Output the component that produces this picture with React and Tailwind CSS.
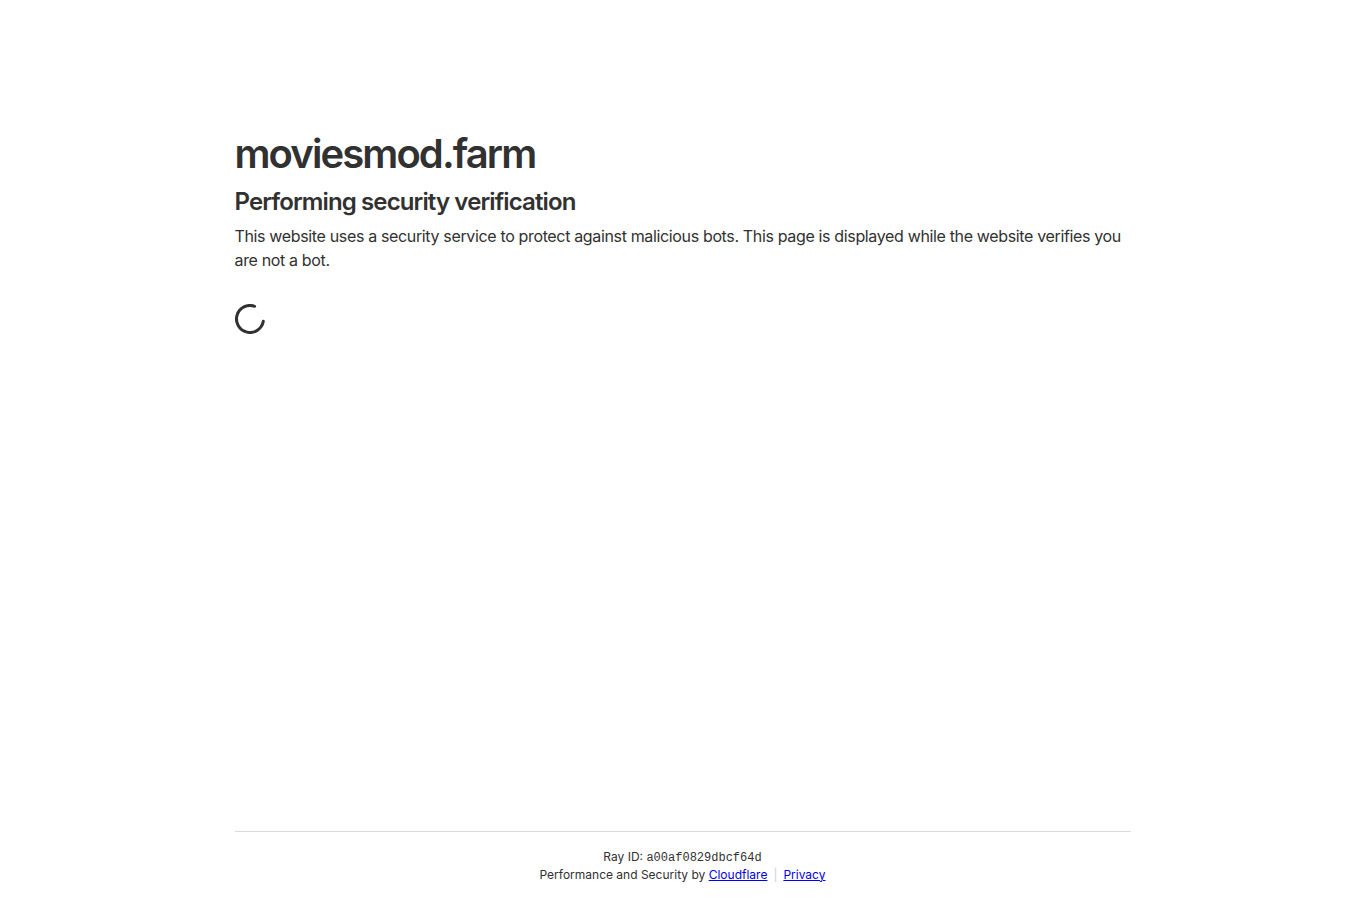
export default function App() {
  return (
    <div
      className="min-h-screen flex flex-col bg-white text-[#313131]"
      style={{ fontFamily: 'Inter, "Noto Sans", sans-serif' }}
    >
      <main className="w-[896px] mx-auto pt-[129px]">
        <h1 className="text-[40px] leading-[50px] font-semibold tracking-[-1.9px]">moviesmod.farm</h1>
        <h2 className="mt-[8px] text-[24px] leading-[30px] font-semibold tracking-[-0.88px]">Performing security verification</h2>
        <p className="mt-[7px] text-[16px] leading-[24px] tracking-[-0.35px]">
          This website uses a security service to protect against malicious bots. This page is displayed while the website verifies you are not a bot.
        </p>
        <div className="mt-[32px] w-[30px] h-[30px]">
          <svg width="30" height="30" viewBox="0 0 30 30" fill="none">
            <path
              d="M28.3 17.34 A13.5 13.5 0 1 1 19.62 2.31"
              stroke="#313131"
              strokeWidth="3"
              strokeLinecap="round"
            />
          </svg>
        </div>
      </main>
      <footer className="mt-auto w-[896px] mx-auto border-t border-[#d9d9d9] pt-[16px] pb-[16.5px] text-center text-[12px] leading-[18px]">
        <div className="h-[17.5px]">
          Ray ID: <code style={{ fontFamily: '"Liberation Mono", monospace' }}>a00af0829dbcf64d</code>
        </div>
        <div>
          Performance and Security by{' '}
          <a href="#" className="text-[#0000ee] underline">Cloudflare</a>
          <span className="text-[#d0d0d0] mx-[6px]">|</span>
          <a href="#" className="text-[#0000ee] underline">Privacy</a>
        </div>
      </footer>
    </div>
  );
}
